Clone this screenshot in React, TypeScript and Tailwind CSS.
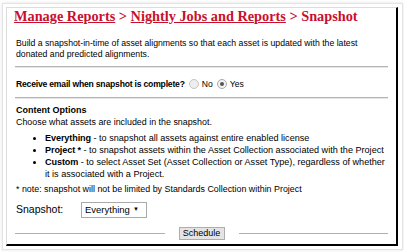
export default function App() {
  return (
    <div className="w-[404px] h-[252px] bg-white pt-[3px] pl-[2px] pr-[1px] pb-[2px] font-['Liberation_Sans',Arial,sans-serif] text-black">
      <div className="h-full border border-[#e4e4e4] shadow-[0_0_3px_rgba(0,0,0,0.12)] pt-[3px] pl-[3px] pr-[4px] pb-[4px]">
        <div className="h-[239px] border-l border-t border-[#dcdcdc] border-r-2 border-b-2 border-r-black border-b-black pl-[7px] pr-[7px]">
          <h1 className="font-['Liberation_Serif',serif] font-bold text-[14.3px] leading-[17px] text-[#c8102e]">
            <span className="underline decoration-[#c8102e]">Manage Reports</span> &gt;{" "}
            <span className="underline decoration-[#c8102e]">Nightly Jobs and Reports</span> &gt; Snapshot
          </h1>
          <p className="text-[8.7px] leading-[11px] mt-[13px] pl-[2px]">
            Build a snapshot-in-time of asset alignments so that each asset is updated with the latest
            <br />
            donated and predicted alignments.
          </p>
          <hr className="mt-[6px] border-t border-b border-t-[#b4b4b4] border-b-[#e6e6e6] mx-[1px]" />
          <div className="flex items-center text-[8.6px] pl-[2px] mt-[9px] h-[14px]">
            <span className="font-bold tracking-[-0.2px]">Receive email when snapshot is complete?</span>
            <span className="ml-[4px] w-[10px] h-[10px] rounded-full border border-[#c4c4c4] bg-[#eeeeee]" />
            <span className="ml-[3px]">No</span>
            <span className="ml-[4px] w-[10px] h-[10px] rounded-full border border-[#a8a8a8] bg-[#f4f4f4] flex items-center justify-center">
              <span className="w-[4px] h-[4px] rounded-full bg-[#555]" />
            </span>
            <span className="ml-[3px]">Yes</span>
          </div>
          <hr className="mt-[6px] border-t border-b border-t-[#b4b4b4] border-b-[#e6e6e6] mx-[1px]" />
          <div className="text-[8.9px] leading-[12px] pl-[2px] mt-[5px]">
            <div className="font-bold text-[9px]">Content Options</div>
            <div>Choose what assets are included in the snapshot.</div>
            <ul className="list-disc pl-[29px] mt-[5px] leading-[11.9px] text-[9.1px]">
              <li>
                <b className="tracking-[-0.1px]">Everything</b> - to snapshot all assets against entire enabled license
              </li>
              <li>
                <b className="tracking-[-0.1px]">Project *</b> - to snapshot assets within the Asset Collection associated with the Project
              </li>
              <li>
                <b className="tracking-[-0.1px]">Custom</b> - to select Asset Set (Asset Collection or Asset Type), regardless of whether
                <br />
                it is associated with a Project.
              </li>
            </ul>
            <div className="mt-[2px]">* note: snapshot will not be limited by Standards Collection within Project</div>
          </div>
          <div className="flex items-center mt-[7px] pl-[2px]">
            <span className="w-[65px] text-[10.5px]">Snapshot:</span>
            <span className="h-[16px] w-[66px] border border-[#a9a9a9] flex items-center pl-[3px] gap-[3px] bg-white text-[9.5px]">
              Everything <span className="text-[6px]">▼</span>
            </span>
          </div>
          <div className="flex items-center mt-[9px]">
            <div className="flex-1 border-t border-[#b0b0b0] ml-[1px]" />
            <button className="mx-[14px] h-[13px] w-[46px] text-[9px] leading-none border border-[#adadad] bg-[#e4e4e4]">
              Schedule
            </button>
            <div className="flex-1 border-t border-[#b0b0b0] mr-[1px]" />
          </div>
        </div>
      </div>
    </div>
  );
}
